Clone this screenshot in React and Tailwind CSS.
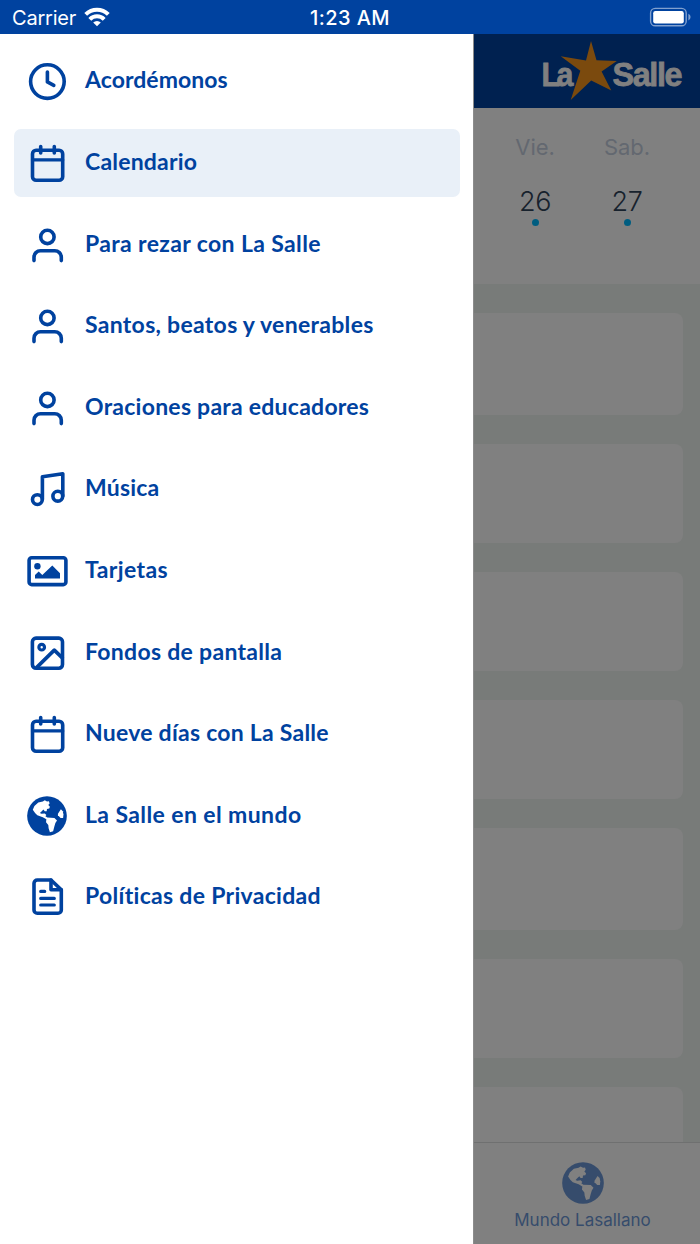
import { useState } from "react";
import clsx from "clsx";

function LineIcon({ children }) {
  return (
    <svg
      viewBox="0 0 44 44"
      className="w-11 h-11 shrink-0"
      fill="none"
      stroke="currentColor"
      strokeWidth="3.6"
      strokeLinecap="round"
      strokeLinejoin="round"
    >
      {children}
    </svg>
  );
}

function ClockIcon() {
  return (
    <LineIcon>
      <circle cx="22.4" cy="22.6" r="16.8" />
      <path d="M22.4 13v9.9l6.4 3.4" />
    </LineIcon>
  );
}

function CalendarIcon() {
  return (
    <LineIcon>
      <rect x="7.5" y="9.3" width="30.2" height="30" rx="3.6" />
      <path d="M7.5 18.9h30.2" strokeWidth="3.2" />
      <path d="M15.7 5.6v6.4M29.3 5.6v6.4" />
    </LineIcon>
  );
}

function PersonIcon() {
  return (
    <LineIcon>
      <circle cx="22.4" cy="13.9" r="6.7" />
      <path d="M9 37.6v-3.4a6.5 6.5 0 0 1 6.5-6.5h14.3a6.5 6.5 0 0 1 6.5 6.5v3.4" />
    </LineIcon>
  );
}

function MusicIcon() {
  return (
    <LineIcon>
      <circle cx="12.4" cy="32.6" r="4.9" />
      <circle cx="32.8" cy="29.2" r="4.9" />
      <path d="M17.4 32.3V9.8L37.8 6.8V29" />
    </LineIcon>
  );
}

function CardIcon() {
  return (
    <LineIcon>
      <rect x="4.1" y="8.7" width="36.8" height="26.9" rx="2.6" />
      <circle cx="12.4" cy="17.2" r="3.2" fill="currentColor" stroke="none" />
      <path
        d="M10 29.6v-3.7l3.7-3.3 3.6 3.3 10-9.5 7.7 7.8v5.4z"
        fill="currentColor"
        stroke="none"
      />
    </LineIcon>
  );
}

function WallpaperIcon() {
  return (
    <LineIcon>
      <rect x="7.4" y="7.1" width="30.1" height="30.1" rx="3.6" />
      <circle cx="16.7" cy="16.2" r="2.8" strokeWidth="3.2" />
      <path d="M12 36.1 29.3 19.1l8 7.8" />
    </LineIcon>
  );
}

function FileIcon() {
  return (
    <LineIcon>
      <path d="M26 5H12.3A3.3 3.3 0 0 0 9 8.3V35a3.3 3.3 0 0 0 3.3 3.3H33a3.3 3.3 0 0 0 3.3-3.3V14.8z" />
      <path d="M26 5v9.8h10.3" />
      <path d="M15.7 16.4h4M15.7 23.4h13.6M15.7 30h13.6" strokeWidth="3.2" />
    </LineIcon>
  );
}

// Land masses are filled separately so the same globe works on any background
function Globe({ className, land }) {
  return (
    <svg viewBox="276 276 124 124" className={className}>
      <circle cx="338" cy="338" r="61.5" fill="currentColor" />
      <g fill={land}>
        <path d="M294 319l5-12 12-11 14-3 6-4 7 4 6-1 2 7-4 5 5 5-2 6-7 1-1 7-6 0-4-5-6 6-5 5 5 2 10-1 5 5-3 4 6 4 22 1 8 8-5 8-3 10-4 15-10 3-4-12-1-10-7-9 1-9-11-6-17-6-7-7z" />
        <path d="M372 331l9-14 6 6 2 10-1 11-8 0-8-8z" />
      </g>
    </svg>
  );
}

function GlobeIcon() {
  return (
    <span className="w-11 h-11 shrink-0 pt-0.5 pl-[2px]">
      <Globe className="w-10 h-10" land="#fff" />
    </span>
  );
}

const MENU = [
  { label: "Acordémonos", Icon: ClockIcon, tracking: "tracking-[0.05px]" },
  { label: "Calendario", Icon: CalendarIcon, tracking: "tracking-[0.2px]" },
  { label: "Para rezar con La Salle", Icon: PersonIcon, tracking: "tracking-[0.37px]" },
  { label: "Santos, beatos y venerables", Icon: PersonIcon, tracking: "tracking-[0.3px]" },
  { label: "Oraciones para educadores", Icon: PersonIcon, tracking: "tracking-[0.25px]" },
  { label: "Música", Icon: MusicIcon, tracking: "tracking-[0.2px]" },
  { label: "Tarjetas", Icon: CardIcon, tracking: "tracking-[0.4px]" },
  { label: "Fondos de pantalla", Icon: WallpaperIcon, tracking: "tracking-[0.3px]" },
  { label: "Nueve días con La Salle", Icon: CalendarIcon, tracking: "tracking-[0.25px]" },
  { label: "La Salle en el mundo", Icon: GlobeIcon, tracking: "tracking-[0.4px]" },
  { label: "Políticas de Privacidad", Icon: FileIcon, tracking: "tracking-[0.3px]" },
];

const DAYS = [
  { name: "Vie.", number: 26 },
  { name: "Sab.", number: 27 },
];

const CARD_HEIGHTS = ["h-[102px]", "h-[99px]", "h-[99px]", "h-[99px]", "h-[102px]", "h-[99px]", "h-[99px]"];

function StatusBar() {
  return (
    <header className="h-[34px] shrink-0 grid grid-cols-3 items-center bg-[#00429f] text-white font-['Inter',sans-serif] text-[20px] leading-none pl-3 pr-[9px]">
      <div className="flex items-center gap-2 pt-[2px]">
        <span className="tracking-[-0.2px]">Carrier</span>
        <svg viewBox="0 0 26 20" className="w-[26px] h-5 -mt-[3px]" fill="none" stroke="currentColor" strokeWidth="4">
          <path d="M1.7 7.4a16.2 16.2 0 0 1 22.6 0" />
          <path d="M5.8 12.3a10 10 0 0 1 14.4 0" />
          <path d="M13 19.3l-3.8-3.8a5.4 5.4 0 0 1 7.6 0z" fill="currentColor" stroke="none" />
        </svg>
      </div>
      <span className="text-center font-medium tracking-[0.4px] pt-[2px] pr-[3px]">1:23 AM</span>
      <svg viewBox="0 0 42 20" className="w-[42px] h-5 justify-self-end">
        <rect x="1.6" y="1.4" width="35.6" height="17.4" rx="4.6" fill="none" stroke="#80a0cf" strokeWidth="1.4" />
        <rect x="4.2" y="4" width="30.6" height="12.4" rx="2.2" fill="#fff" />
        <path d="M39.4 6.8a3.6 3.6 0 0 1 0 6.6z" fill="#80a0cf" />
      </svg>
    </header>
  );
}

function Drawer({ active, onSelect }) {
  return (
    <nav className="w-[473px] shrink-0 bg-white pt-[13.4px] pl-[14px] pr-[13px] flex flex-col gap-[13.6px]">
      {MENU.map(({ label, Icon, tracking }) => (
        <button
          key={label}
          type="button"
          onClick={() => onSelect(label)}
          className={clsx(
            "h-[68px] shrink-0 flex items-center pl-[11px] rounded-[7px] text-[#00429f]",
            label === active && "bg-[#e9f0f8]"
          )}
        >
          <Icon />
          <span
            className={clsx(
              "ml-4 -mt-1 whitespace-nowrap font-['Lato','Noto_Sans',sans-serif] font-bold text-[23px] leading-8 [font-variant-ligatures:none]",
              tracking
            )}
          >
            {label}
          </span>
        </button>
      ))}
    </nav>
  );
}

function Logo() {
  return (
    <svg viewBox="0 0 144 60" className="w-36 h-[60px]" aria-label="La Salle">
      <g
        fill="#808080"
        stroke="#808080"
        strokeWidth="0.8"
        fontFamily="'Liberation Sans', Arial, sans-serif"
        fontWeight="bold"
        fontSize="33"
      >
        <text transform="translate(-0.5 45) scale(0.92 1)" letterSpacing="-3.8">La</text>
        <text transform="translate(70.5 45) scale(0.98 1)" letterSpacing="-1.4">Salle</text>
      </g>
      <path d="M49 0l5.5 19.3 20.3.6-15.2 10.6 9.7 19-20.1-10L28.7 59l9.6-29.3-19.6-14.4 25.3 4.3z" fill="#7b4a0e" />
    </svg>
  );
}

// What stays visible of the calendar screen under the drawer's dim layer
function CalendarScreen() {
  return (
    <main className="flex-1 min-w-0 flex flex-col bg-[#787b79] border-l border-[#8c8c8c] font-['Inter',sans-serif]">
      <div className="h-[74px] shrink-0 bg-[#002150] flex justify-end items-center pr-[14px]">
        <Logo />
      </div>
      <section className="h-44 shrink-0 bg-[#808080] flex pl-[15px]">
        {DAYS.map((day) => (
          <div key={day.name} className="w-[92px] flex flex-col items-center pt-[25px]">
            <span className="text-[22px] leading-7 tracking-[-0.1px] text-[#636870]">{day.name}</span>
            <span className="mt-[25px] text-[27px] leading-8 font-light tracking-[-0.4px] text-[#17222d]">{day.number}</span>
            <span className="mt-px w-[7px] h-[7px] rounded-full bg-[#005d80]" />
          </div>
        ))}
      </section>
      <section className="h-[858px] shrink-0 overflow-hidden pt-[29px] pr-[17px] flex flex-col gap-[29px]">
        {CARD_HEIGHTS.map((height, i) => (
          <div key={i} className={clsx("shrink-0 rounded-r-lg bg-[#808080]", height)} />
        ))}
      </section>
      <footer className="flex-1 bg-[#808080] border-t border-[#6f7070] flex flex-col items-center pt-[19px] pr-[9px]">
        <Globe className="w-[42px] h-[42px] text-[#364c6c]" land="#808080" />
        <span className="mt-1 text-[17px] leading-6 whitespace-nowrap text-[#364c6c]">
          Mundo Lasallano
        </span>
      </footer>
    </main>
  );
}

export default function App() {
  const [active, setActive] = useState("Calendario");

  return (
    <div className="w-[700px] h-[1244px] flex flex-col overflow-hidden">
      <StatusBar />
      <div className="flex-1 flex min-h-0">
        <Drawer active={active} onSelect={setActive} />
        <CalendarScreen />
      </div>
    </div>
  );
}
